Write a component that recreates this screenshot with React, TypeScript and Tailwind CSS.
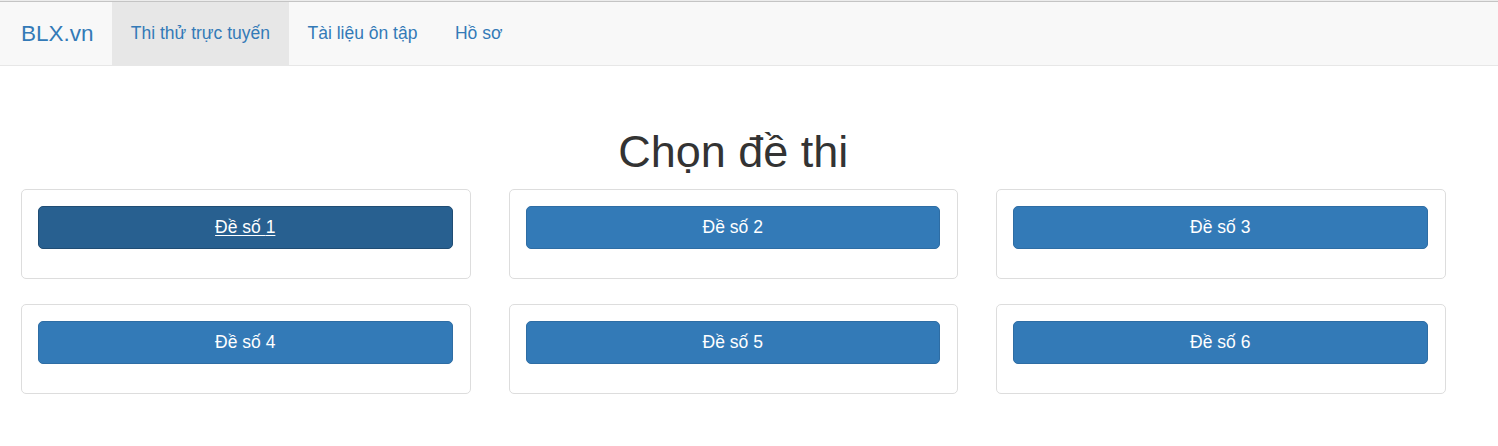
import { useState } from "react";

const navLinks = ["Thi thử trực tuyến", "Tài liệu ôn tập", "Hồ sơ"];
const exams = [1, 2, 3, 4, 5, 6];

export default function App() {
  const [active] = useState(0);
  const [focused] = useState(1);

  return (
    <div className="min-h-screen bg-white text-[#333] font-['Liberation_Sans',Arial,sans-serif]">
      <div className="h-px bg-[#ececec]" />
      <div className="h-px bg-[#c4c4c4]" />
      <nav className="flex h-[64px] items-stretch border-b border-[#e7e7e7] bg-[#f8f8f8]">
        <a className="flex items-center pl-[21px] pr-[18.5px] text-[22.5px] leading-[25px] text-[#337ab7]">
          BLX.vn
        </a>
        <ul className="flex items-stretch">
          {navLinks.map((label, i) => (
            <li
              key={label}
              className={
                "flex items-center px-[18.75px] text-[17.5px] leading-[25px] text-[#337ab7] " +
                (i === active ? "bg-[#e7e7e7]" : "")
              }
            >
              {label}
            </li>
          ))}
        </ul>
      </nav>

      <div className="w-[1424.5px] ml-[21px] mt-[61px]">
        <h1 className="text-center text-[45px] leading-[1.1] font-normal mb-[12.5px]">
          Chọn đề thi
        </h1>
        <div className="grid grid-cols-[repeat(3,449.5px)] gap-x-[38px] gap-y-[25px]">
          {exams.map((n) => (
            <div
              key={n}
              className="rounded-[5px] border border-[#ddd] bg-white pl-4 pr-[17px] pt-4 pb-[29px]"
            >
              <button
                className={
                  "flex h-[43px] w-full items-center justify-center rounded-[5px] border text-[17.5px] text-white " +
                  (n === focused
                    ? "bg-[#286090] border-[#204d74] underline underline-offset-2"
                    : "bg-[#337ab7] border-[#2e6da4]")
                }
              >
                Đề số {n}
              </button>
            </div>
          ))}
        </div>
      </div>
    </div>
  );
}
